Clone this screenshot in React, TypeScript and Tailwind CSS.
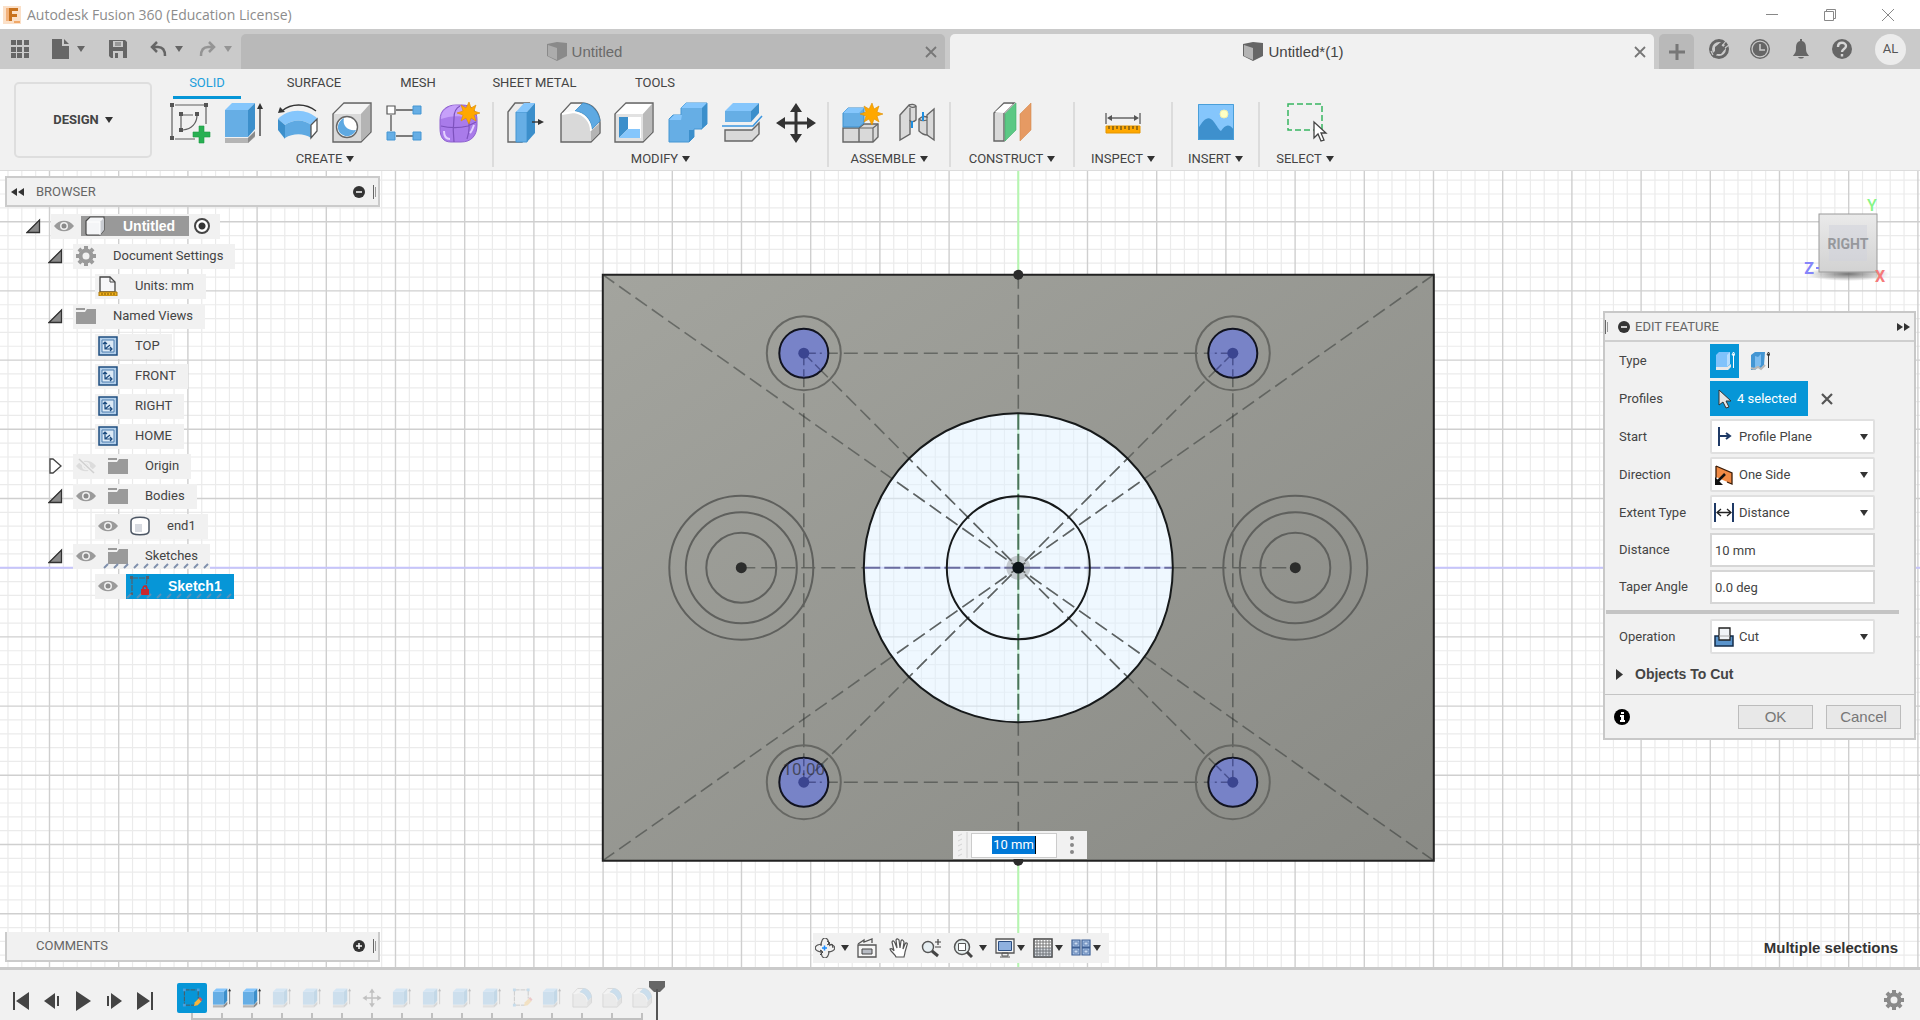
import type { ReactNode } from 'react';
import clsx from 'clsx';

type IconProps = {
  w?: number;
  h?: number;
  box?: string;
  className?: string;
  children?: ReactNode;
};

const Icon = ({ w = 20, h = w, box = `0 0 ${w} ${h}`, className, children }: IconProps) => (
  <svg width={w} height={h} viewBox={box} className={clsx('shrink-0', className)} fill="none" aria-hidden="true">
    {children}
  </svg>
);

const Caret = ({ className = 'text-[#333]' }: { className?: string }) => (
  <Icon w={8} h={6} className={className}>
    <path d="M0 0h8L4 6z" fill="currentColor" />
  </Icon>
);

/* ---------- ribbon icons, 40 x 42 ---------- */

const SketchIcon = () => (
  <>
    <path d="M5 3h29M2 5v29M36 5v17M5 37h20M13 13h10M11 14v12M27 13c0 8-5 14-14 15" stroke="#5f5f5f" strokeWidth="1.2" />
    <path d="M0 1h4v4H0zM34 1h4v4h-4zM0 34h4v4H0zM9 10h4v4H9zM25 10h4v4h-4zM9 26h4v4H9z" fill="#555" />
    <path d="M29 24h5v6h6v5h-6v6h-5v-6h-6v-5h6z" fill="#28b052" stroke="#1d9a43" strokeWidth=".6" />
  </>
);

const ExtrudeIcon = () => (
  <>
    <path d="M1 36h23l7-6v5l-7 6H1z" fill="#b5b5b5" />
    <path d="M24 36l7-7v5l-7 7z" fill="#8a8a8a" />
    <path d="M1 8h23v27H1z" fill="#66aee5" />
    <path d="M1 8l7-7h23l-7 7z" fill="#85c6fc" />
    <path d="M24 8l7-7v26l-7 8z" fill="#3c8fcb" />
    <path d="M36 6v28" stroke="#333" strokeWidth="1.3" />
    <path d="M36 1l3 6h-6z" fill="#333" />
  </>
);

const RevolveIcon = () => (
  <>
    <path d="M0 17c10-11 29-11 40 0l-7 6c-7-6-18-6-26 0z" fill="#85c6fc" />
    <path d="M7 23c8-6 19-6 26 0v13c-7-5-18-5-26 0z" fill="#5ea9e2" />
    <path d="M0 17l7 6v14l-7-9z" fill="#3c8fcb" />
    <path d="M33 23l6-6v12l-6 7z" fill="#fff" stroke="#555" strokeWidth="1.3" />
    <path d="M4 9c9-8 24-8 34 0" stroke="#333" strokeWidth="1.3" />
    <path d="M0 11l2-6 5 5z" fill="#333" />
  </>
);

const HoleIcon = () => (
  <>
    <path d="M1 12L12 1h27v29L29 40H1z" fill="#d9d9d9" stroke="#666" strokeWidth="1.4" />
    <path d="M2 12L12 2h26l-9 10z" fill="#f4f4f4" />
    <path d="M29 12l9-10v28l-9 9z" fill="#b4b4b4" />
    <circle cx="15" cy="25" r="10.500" fill="#fff" stroke="#666" strokeWidth="1.4" />
    <path d="M12 16c-6 3-8 10-4 15 5 5 13 4 16-3-8 1-14-4-12-12z" fill="#5ea9e2" />
  </>
);

const PatternIcon = () => (
  <>
    <path d="M10 8h17M5 13v16M10 34h17" stroke="#555" strokeWidth="1.3" />
    <path d="M1 4h8v8H1z" fill="#fff" stroke="#555" strokeWidth="1.2" />
    <path d="M27 4h8v8h-8zM1 30h8v8H1zM27 30h8v8h-8z" fill="#66aee5" stroke="#4496d3" />
  </>
);

const FormIcon = () => (
  <>
    <path d="M0 18C0 8 7 3 16 3h6c10 0 15 6 15 15v5c0 11-6 17-16 17H11C3 40 0 35 0 26z" fill="#a97bea" stroke="#8f63cf" />
    <path d="M9 5C3 8 1 12 1 17c8-3 18-4 27-1 1-5 0-9-6-12C17 3 13 3 9 5z" fill="#c6a0fa" />
    <path d="M1 24c8 2 19 2 27 0l8-4M14 16c-1 8-1 16 0 24M28 16c2 7 1 15-1 21M14 16c0-6 2-10 6-12" stroke="#7d52bd" strokeWidth="1.2" />
    <path d="M4 29c0 5 2 8 6 8M30 31c2-2 3-5 4-8" stroke="#e3d0ff" strokeWidth="2" />
    <path d="M29 0l2 6 5-3-2 6 6 2-6 2 2 6-5-3-2 6-3-6-5 3 2-6-6-2 6-2-2-6 5 3z" fill="#ffa800" stroke="#dd8f00" strokeWidth=".6" />
  </>
);

const PressPullIcon = () => (
  <>
    <path d="M2 10l7-9h14l-7 9v30H2z" fill="#ececec" stroke="#666" strokeWidth="1.4" />
    <path d="M10 10h11v30H10z" fill="#66aee5" stroke="#4496d3" />
    <path d="M10 10l8-9h11l-8 9z" fill="#85c6fc" />
    <path d="M21 10l8-9v30l-8 9z" fill="#3c8fcb" />
    <path d="M26 20h8" stroke="#333" strokeWidth="1.4" />
    <path d="M32 17l6 3-6 3z" fill="#333" />
  </>
);

const FilletIcon = () => (
  <>
    <path d="M1 12L11 1h11c11 0 18 10 18 20v10l-9 9H1z" fill="#d9d9d9" stroke="#666" strokeWidth="1.4" />
    <path d="M2 12L11 2h11l-7 8z" fill="#f8f8f8" />
    <path d="M15 9l8-8c10 1 16 10 17 18l-8 8C31 17 25 10 15 9z" fill="#5ea9e2" stroke="#3c8fcb" strokeWidth=".8" />
    <path d="M2 12l12-2c11 2 17 10 17 19" stroke="#fff" strokeWidth="2" />
    <path d="M31 29l8-7v9l-8 8z" fill="#b4b4b4" />
  </>
);

const ShellIcon = () => (
  <>
    <path d="M1 12L12 1h27v29L29 40H1z" fill="#e2e2e2" stroke="#666" strokeWidth="1.4" />
    <path d="M2 12L12 2h26l-9 10z" fill="#fff" />
    <path d="M29 12l9-10v28l-9 9z" fill="#bababa" />
    <path d="M5 15h22v21H5z" fill="#fff" />
    <path d="M5 15h9v12l-9 9z" fill="#3c8fcb" />
    <path d="M5 36l9-9h12v9z" fill="#85c6fc" />
  </>
);

const CombineIcon = () => (
  <>
    <path d="M1 17l4-4h8V6l5-5h21v21l-6 5h-7v8l-5 5H1z" fill="#66aee5" stroke="#4496d3" />
    <path d="M13 6l5-5h21l-5 5zM1 18l5-5h8l-1 5z" fill="#85c6fc" />
    <path d="M34 6l5-5v21l-6 6h-7v7l-5 5V28h13z" fill="#3c8fcb" />
  </>
);

const SplitIcon = () => (
  <>
    <path d="M3 28h27l7-7v11l-7 7H3z" fill="#d9d9d9" stroke="#666" strokeWidth="1.4" />
    <path d="M3 9h26v11H3z" fill="#66aee5" />
    <path d="M3 9l8-8h26l-8 8z" fill="#85c6fc" />
    <path d="M29 9l8-8v10l-8 9z" fill="#3c8fcb" />
    <path d="M0 24h31l9-10" stroke="#3d97e0" strokeWidth="1.6" />
  </>
);

const MoveIcon = () => (
  <>
    <path d="M20 7v28M6 21h28" stroke="#333" strokeWidth="3" />
    <path d="M20 1l6 9H14zM20 41l6-9H14zM0 21l9-6v12zM40 21l-9-6v12z" fill="#333" />
  </>
);

const ComponentIcon = () => (
  <>
    <path d="M1 26h16v14H1zM17 26l5-4h14v13l-5 5H17z" fill="#d9d9d9" stroke="#666" strokeWidth="1.4" />
    <path d="M17 26h14v14M31 26l5-4" stroke="#666" strokeWidth="1.2" />
    <path d="M1 11l5-5h16v15l-5 4H1z" fill="#66aee5" stroke="#3c8fcb" />
    <path d="M1 11l5-5h16l-5 5z" fill="#85c6fc" />
    <path d="M30 1l2 6 5-3-2 6 6 2-6 2 2 6-5-3-2 6-3-6-5 3 2-6-6-2 6-2-2-6 5 3z" fill="#ffa800" stroke="#dd8f00" strokeWidth=".6" />
  </>
);

const JointIcon = () => (
  <>
    <path d="M4 13l9-10c2-1 6-1 7 1v14c-2 2-4 2-6 1v13l-10 6z" fill="#d9d9d9" stroke="#666" strokeWidth="1.4" />
    <path d="M38 7v31l-7-5c-3 0-6-2-8-4V17c2-2 5-3 8-2l0-2z" fill="#d9d9d9" stroke="#666" strokeWidth="1.4" />
    <path d="M31 15v18M23 17c2 2 5 2 8 1M13 3c1 3 5 3 7 1M14 6v13" stroke="#666" strokeWidth="1.2" />
    <path d="M16 19v7M27 10v9" stroke="#1f8fe0" strokeWidth="2" />
  </>
);

const ConstructIcon = () => (
  <>
    <path d="M2 11L12 1h10L12 11v28H2z" fill="#d9d9d9" stroke="#666" strokeWidth="1.4" />
    <path d="M3 10l9-8h9l-9 9z" fill="#fff" />
    <path d="M13 12L24 1v27L13 39z" fill="#5bc884" stroke="#3fae68" strokeWidth=".6" />
    <path d="M28 12L39 1v27L28 39z" fill="#e69a63" stroke="#d5894f" strokeWidth=".6" />
  </>
);

const MeasureIcon = () => (
  <>
    <path d="M3 11v11M37 11v11M6 16h28" stroke="#666" strokeWidth="1.4" />
    <path d="M4 16l5-3v6zM36 16l-5-3v6z" fill="#555" />
    <path d="M3 24h34v7H3z" fill="#ffa800" stroke="#e39500" />
    <path d="M6 24v3M10 24v4M14 24v3M18 24v4M22 24v3M26 24v4M30 24v3M34 24v4" stroke="#5b4a1c" strokeWidth="1.2" />
  </>
);

const ImageIcon = () => (
  <>
    <path d="M2 2h36v36H2z" fill="#85c6fc" />
    <path d="M2 27c6-11 11-14 16-7 3 4 5 8 7 9 4-6 8-8 13-1v10H2z" fill="#3e90cd" />
    <circle cx="28" cy="12" r="4" fill="#ffffc4" stroke="#f0eeb0" />
    <path d="M2.500 2.500h35v35h-35z" stroke="#4a9fd9" />
  </>
);

const SelectIcon = () => (
  <>
    <path d="M3 2h34v26H3z" stroke="#37b560" strokeWidth="1.5" strokeDasharray="6 3" />
    <path d="M29 20v16l4-4 3 7 3-1-3-7h5z" fill="#fff" stroke="#444" strokeWidth="1.3" />
  </>
);

/* ---------- small icons ---------- */

const Eye = ({ off = false }: { off?: boolean }) => (
  <Icon w={20}>
    <path d="M0 10c5-7 15-7 20 0-5 7-15 7-20 0z" fill={off ? '#dcdcdc' : '#9a9a9a'} />
    <circle cx="10" cy="10" r="4" fill="#f0f0f0" />
    <circle cx="10" cy="10" r="2.500" fill={off ? '#dcdcdc' : '#8a8a8a'} />
    {off && <path d="M2 3l16 14" stroke="#f0f0f0" strokeWidth="4" />}
    {off && <path d="M3 3l15 14" stroke="#d0d0d0" strokeWidth="1.5" />}
  </Icon>
);

const Folder = () => (
  <Icon w={20}>
    <path d="M0 2h9v2H0z" fill="#9a9a9a" />
    <path d="M0 6h9l2-3h9v15H0z" fill="#9a9a9a" />
  </Icon>
);

const GearShape = ({ color }: { color: string }) => (
  <>
    <circle cx="10" cy="10" r="5.500" stroke={color} strokeWidth="4" />
    {[0, 45, 90, 135].map((a) => (
      <path key={a} d="M8 0h4v3H8zM8 17h4v3H8z" fill={color} transform={`rotate(${a} 10 10)`} />
    ))}
  </>
);

const Units = () => (
  <Icon w={20}>
    <path d="M2 1h10l5 5v10H2z" fill="#f6f6f8" stroke="#444" strokeWidth="1.3" />
    <path d="M12 1v5h5" stroke="#444" />
    <path d="M1 16h18v4H1z" fill="#f0b21c" stroke="#a8740a" />
    <path d="M4 17v2M7 17v2M10 17v2M13 17v2M16 17v2" stroke="#7a5200" />
  </Icon>
);

const ViewIcon = () => (
  <Icon w={20}>
    <path d="M1 1h18v18H1z" fill="#b3cfea" stroke="#1e4d80" strokeWidth="1.5" />
    <path d="M4 4h12v12H4z" fill="#dbe9f6" stroke="#4e7eb0" />
    <path d="M7 6v7h7M7 13l5-4M5 8l2-2 2 2M12 11l2 2-2 2" stroke="#1e4d80" strokeWidth="1.2" />
  </Icon>
);

const CubeIcon = () => (
  <Icon w={20}>
    <path d="M1 5l4-4h14v13l-4 5H2l-1-1z" fill="#f4f5f7" stroke="#4a4a4a" strokeWidth="1.2" />
    <path d="M15 6l4-4v12l-4 5z" fill="#c9ccd2" />
    <path d="M2 6h13v13" stroke="#fff" />
  </Icon>
);

const BodyIcon = () => (
  <Icon w={20}>
    <path d="M1 5c0-5 18-5 18 0v10c0 5-18 5-18 0z" fill="#fff" stroke="#4b5563" strokeWidth="1.5" />
    <path d="M5 8h7v8H5z" fill="#d7dae0" />
  </Icon>
);

const LockedSketch = () => (
  <Icon w={20}>
    <path d="M2 2h15M2 2v16M17 2l-1 10" stroke="#55606c" strokeWidth="1.2" strokeDasharray="6 1" />
    <path d="M0 0h3v3H0zM16 0h3v3h-3zM0 17h3v2H0z" fill="#55606c" />
    <path d="M11 13h8v6h-8z" fill="#c9282d" />
    <path d="M13 13c0-4 4-4 4 0" stroke="#c9282d" strokeWidth="1.5" />
  </Icon>
);

const Cursor = () => (
  <Icon w={14} h={20}>
    <path d="M1 1v15l4-3 3 6 3-1-3-6h5z" fill="#e6e6e6" stroke="#333" />
  </Icon>
);

const RoundGlyph = ({ plus = false }: { plus?: boolean }) => (
  <Icon w={12}>
    <circle cx="6" cy="6" r="6" fill="#333" />
    <path d={plus ? 'M3 6h6M6 3v6' : 'M3 6h6'} stroke="#fff" strokeWidth="1.5" />
  </Icon>
);

const Grip = () => (
  <span className="flex items-center gap-px">
    <span className="h-[14px] w-px bg-[#666]" />
    <span className="h-[10px] w-px bg-[#999]" />
  </span>
);

const DocCube = ({ dim }: { dim: boolean }) => (
  <Icon w={20}>
    <path d="M0 2l10-2 10 1v13l-10 5L0 14z" fill={dim ? '#8a8a8a' : '#666'} />
    <path d="M1 3l9 3v12l-9-4z" fill={dim ? '#acacac' : '#b4b4b4'} />
  </Icon>
);

/* ---------- title bar and document tabs ---------- */

const TitleBar = () => (
  <header className="flex h-[29px] items-center bg-white pl-[3px] pr-[26px]">
    <Icon w={18}>
      <path d="M0 0h18v18H0z" fill="#fbe0c8" />
      <path d="M5 2h10v3H9v3h5v3H9v4H5z" fill="#c8721e" />
      <path d="M3 2h3v13H3z" fill="#f2b27c" />
      <path d="M11 15h6v2h-6z" fill="#f0a868" />
    </Icon>
    <h1 className="ml-[6px] font-['Open_Sans',sans-serif] text-[14px] text-[#8c8c8c]">Autodesk Fusion 360 (Education License)</h1>
    <div className="ml-auto flex gap-[46px]">
      <button aria-label="Minimize">
        <Icon w={12}><path d="M0 5.500h12" stroke="#888" /></Icon>
      </button>
      <button aria-label="Restore">
        <Icon w={12}><path d="M.5 2.500h9v9h-9zM2.500 2V.5h9v9H10" stroke="#888" /></Icon>
      </button>
      <button aria-label="Close window">
        <Icon w={12}><path d="M0 0l12 12M12 0L0 12" stroke="#888" /></Icon>
      </button>
    </div>
  </header>
);

const DocTab = ({ title, active = false }: { title: string; active?: boolean }) => (
  <div
    className={clsx(
      'flex flex-1 items-center rounded-t-[5px] pr-[8px]',
      active ? 'bg-[#f1f1f1] text-[#444]' : 'bg-[#b9b9b9] text-[#6a6a6a]',
    )}
  >
    <button className="flex flex-1 items-center justify-center gap-[5px] pl-[3px] pt-px font-['Liberation_Sans',sans-serif] text-[15px]">
      <DocCube dim={!active} />
      {title}
    </button>
    <button aria-label={`Close ${title}`}>
      <Icon w={12}><path d="M1 1l10 10M11 1L1 11" stroke="#777" strokeWidth="1.8" /></Icon>
    </button>
  </div>
);

const TabBar = () => (
  <div className="flex h-10 bg-[#cacaca] pt-[5px]">
    <div className="flex w-[241px] items-center pb-[6px] pl-[11px] text-[#666]">
      <button aria-label="Data panel" className="mr-[23px]">
        <Icon w={18}>
          <path d="M0 0h5v5H0zM6 0h5v5H6zM13 0h5v5h-5zM0 7h5v5H0zM6 7h5v5H6zM13 7h5v5h-5zM0 13h5v5H0zM6 13h5v5H6zM13 13h5v5h-5z" fill="currentColor" />
        </Icon>
      </button>
      <button aria-label="File" className="mr-[24px] flex items-center gap-2">
        <Icon w={17} h={20}><path d="M0 0h10v7h7v13H0zM12 0l5 5h-5z" fill="currentColor" /></Icon>
        <Caret className="text-[#666]" />
      </button>
      <button aria-label="Save" className="mr-[23px]">
        <Icon w={18}>
          <path d="M0 0h16l2 2v16H2l-2-2z" fill="currentColor" />
          <path d="M4 1h10v6H4zM4 11h10v7H4z" fill="#cacaca" />
          <path d="M6 3h6M6 5h6" stroke="#666" />
          <path d="M6 13h3v5H6z" fill="#666" />
        </Icon>
      </button>
      <button aria-label="Undo" className="mr-[16px] flex items-center gap-2">
        <Icon w={17} h={16}><path d="M7 1L2 6l5 5M2 6h6c5 0 7 4 7 9" stroke="currentColor" strokeWidth="2.500" /></Icon>
        <Caret className="text-[#666]" />
      </button>
      <button aria-label="Redo" className="flex items-center gap-2 text-[#949494]">
        <Icon w={17} h={16}><path d="M10 1l5 5-5 5M15 6H9c-5 0-7 4-7 9" stroke="currentColor" strokeWidth="2.500" /></Icon>
        <Caret className="text-[#949494]" />
      </button>
    </div>
    <div className="flex flex-1 gap-[5px]">
      <DocTab title="Untitled" />
      <DocTab title="Untitled*(1)" active />
    </div>
    <button aria-label="New design" className="ml-[5px] flex w-[35px] items-center justify-center rounded-t-[5px] bg-[#b9b9b9]">
      <Icon w={16}><path d="M8 0v16M0 8h16" stroke="#777" strokeWidth="3" /></Icon>
    </button>
    <div className="flex items-center gap-[21px] pb-[5px] pl-[15px] pr-[14px] text-[#666]">
      <button aria-label="Extensions">
        <Icon w={20}>
          <circle cx="10" cy="10" r="8.500" stroke="currentColor" strokeWidth="3" />
          <path d="M6 8l5-4 5 6-4 5H8l-3 4-3-3 4-4z" fill="currentColor" />
          <path d="M10 7l4-4M14 10l4-4" stroke="currentColor" strokeWidth="2.500" />
          <path d="M13 7l4-5M16 9l4-3M2 12l2 4" stroke="#cacaca" strokeWidth="1.2" />
        </Icon>
      </button>
      <button aria-label="Job status">
        <Icon w={20}>
          <circle cx="10" cy="10" r="9.300" stroke="currentColor" strokeWidth="1.4" />
          <circle cx="10" cy="10" r="7.300" fill="currentColor" />
          <path d="M10 5v6h5" stroke="#cacaca" strokeWidth="1.6" />
        </Icon>
      </button>
      <button aria-label="Notifications">
        <Icon w={20}>
          <path d="M9 0h2v2c4 1 4 5 4 8 0 4 2 5 3 7H2c1-2 3-3 3-7 0-3 0-7 4-8zM7 18h6c-1 2-5 2-6 0z" fill="currentColor" />
        </Icon>
      </button>
      <button aria-label="Help">
        <Icon w={20}>
          <circle cx="10" cy="10" r="10" fill="currentColor" />
          <path d="M6 8c0-6 8-5 8-1 0 3-4 3-4 6M10 15v2.500" stroke="#d6d6d6" strokeWidth="2.400" />
        </Icon>
      </button>
      <button className="ml-0.5 flex size-[31px] items-center justify-center rounded-full bg-[#ececec] text-[13px] text-[#555]">AL</button>
    </div>
  </div>
);

/* ---------- ribbon ---------- */

const ribbonTabs = [
  { label: 'SOLID', width: 'w-[68px]' },
  { label: 'SURFACE', width: 'w-[146px]' },
  { label: 'MESH', width: 'w-[62px]' },
  { label: 'SHEET METAL', width: 'w-[171px]' },
  { label: 'TOOLS', width: 'w-[70px]' },
];

const groups = [
  { name: 'CREATE', width: 'w-[336px]', tools: [SketchIcon, ExtrudeIcon, RevolveIcon, HoleIcon, PatternIcon, FormIcon] },
  { name: 'MODIFY', width: 'w-[335px]', tools: [PressPullIcon, FilletIcon, ShellIcon, CombineIcon, SplitIcon, MoveIcon] },
  { name: 'ASSEMBLE', width: 'w-[122px]', tools: [ComponentIcon, JointIcon] },
  { name: 'CONSTRUCT', width: 'w-[124px]', tools: [ConstructIcon] },
  { name: 'INSPECT', width: 'w-[98px]', tools: [MeasureIcon] },
  { name: 'INSERT', width: 'w-[87px]', tools: [ImageIcon] },
  { name: 'SELECT', width: 'w-[90px]', tools: [SelectIcon] },
];

const Ribbon = () => (
  <div className="flex h-[102px] border-b border-[#dcdcdc] bg-[#f1f1f1] text-[13px] text-[#444]">
    <button className="ml-[14px] mt-[13px] flex h-[76px] w-[138px] items-center justify-center gap-[6px] rounded-[5px] border-2 border-[#dedede] font-bold">
      DESIGN <Caret />
    </button>
    <div className="ml-[6px]">
      <nav className="flex h-[33px] items-start pl-[15px]">
        {ribbonTabs.map((tab, i) => (
          <button
            key={tab.label}
            className={clsx(
              'h-[30px] whitespace-nowrap text-center',
              tab.width,
              i === 0 ? 'border-b-[3px] border-[#0696d7] text-[#1c9fdc]' : 'pb-[3px]',
            )}
          >
            {tab.label}
          </button>
        ))}
      </nav>
      <div className="flex h-[65px]">
        {groups.map((group, i) => (
          <div
            key={group.name}
            className={clsx(
              'flex flex-col items-center justify-between',
              group.width,
              i < groups.length - 1 && 'border-r-2 border-[#dcdcdc]',
            )}
          >
            <div className="flex gap-[14px]">
              {group.tools.map((Tool, n) => (
                <button key={n} aria-label={`${group.name} tool ${n + 1}`}>
                  <Icon w={40} h={42} className="overflow-visible"><Tool /></Icon>
                </button>
              ))}
            </div>
            <button className="flex items-center gap-1 leading-[16px]">
              {group.name} <Caret />
            </button>
          </div>
        ))}
      </div>
    </div>
  </div>
);

/* ---------- sketch canvas ---------- */

const GRID = 69.2 / 5;
const range = (n: number) => Array.from({ length: n * 2 + 1 }, (_, i) => i - n);
const corners = [[-1, -1], [1, -1], [-1, 1], [1, 1]];

const GridLines = ({ major }: { major: boolean }) => (
  <g stroke={major ? '#cfcfcf' : '#ebebeb'} strokeWidth={major ? 1.4 : 1.2}>
    {range(120).filter((i) => (i % 5 === 0) === major).map((i) => (
      <path key={i} d={`M${i * GRID} -1400V1400M-2400 ${i * GRID}H2400`} />
    ))}
  </g>
);

const Diagonals = () => (
  <>
    {corners.map(([x, y]) => (
      <path key={`${x}${y}`} d={`M${x * 415.5} ${y * 293}L0 0M${x * 214.5} ${y * 214.5}L0 0`} />
    ))}
  </>
);

const Sketch = () => (
  <svg className="absolute inset-0 h-full w-full bg-white" aria-label="Sketch canvas">
    <defs>
      <linearGradient id="plate" x1="0" y1="0" x2="1" y2="1">
        <stop offset="0" stopColor="#a3a49e" />
        <stop offset="1" stopColor="#898a85" />
      </linearGradient>
      <clipPath id="bore"><circle r="154" /></clipPath>
    </defs>
    <svg x="50%" y="50%" overflow="visible">
      <g transform="translate(58.3 -1.3)" fill="none">
        <GridLines major={false} />
        <GridLines major />
        <path d="M-2400 0H2400" stroke="#c6c4fb" strokeWidth="2" />
        <path d="M0 -1400V1400" stroke="#b5f7b0" strokeWidth="2" />
        <circle r="154.500" fill="#e0f1ff" fillOpacity=".5" />
        <path
          d="M-415.500 -293H415.500V293H-415.500zM-154.500 0a154.500 154.500 0 0 0 309 0a154.500 154.500 0 0 0 -309 0z"
          fill="url(#plate)"
          fillRule="evenodd"
        />
        <path d="M-415.500 -293H415.500V293H-415.500z" stroke="#222" strokeWidth="2" />

        {/* construction lines */}
        <g stroke="#2a2d2c" strokeOpacity=".48" strokeWidth="1.600" strokeDasharray="14 6">
          <path d="M-277 0H-154M154 0H277M0 -293V-154M0 154V293" />
          <path d="M-214.500 -214.500H214.500M-214.500 214.500H214.500M-214.500 -214.500V214.500M214.500 -214.500V214.500" />
          <Diagonals />
        </g>
        <g clipPath="url(#bore)" stroke="#2a2d2c" strokeOpacity=".5" strokeWidth="1.600" strokeDasharray="14 6">
          <Diagonals />
        </g>
        <path d="M0 -154V154" stroke="#1f4a30" strokeOpacity=".75" strokeWidth="2" strokeDasharray="16 4" />
        <path d="M-154 0H154" stroke="#33336e" strokeOpacity=".65" strokeWidth="2" strokeDasharray="16 4" />

        <circle r="154.500" stroke="#16191a" strokeWidth="2" />
        <circle r="71.500" stroke="#16191a" strokeWidth="2" />
        {[-277, 277].map((x) => (
          <g key={x} stroke="#5f605d" strokeWidth="2">
            <circle cx={x} r="35" />
            <circle cx={x} r="55.500" />
            <circle cx={x} r="72" />
            <circle cx={x} r="5.500" fill="#2c2d2c" stroke="none" />
          </g>
        ))}
        {corners.map(([x, y]) => (
          <g key={`${x}${y}`} transform={`translate(${x * 214.5} ${y * 214.5})`}>
            <circle r="37" stroke="#666763" strokeWidth="2" />
            <circle r="24.500" fill="#7581cb" fillOpacity=".93" stroke="#111320" strokeWidth="2" />
            <path d={`M0 0H${x * -18}M0 0V${y * -24}M0 0L${x * -17} ${y * -17}`} stroke="#4a5290" strokeWidth="1.500" strokeDasharray="12 4" />
            <circle r="5.500" fill="#3b4590" />
          </g>
        ))}
        <text x="-214.500" y="207" textAnchor="middle" fontSize="17" fill="#33343a" fillOpacity=".75">10.00</text>
        <circle r="12" fill="#777" fillOpacity=".35" />
        <circle r="6" fill="#0c1418" />
        <circle cy="-293" r="5" fill="#2b2b2b" />
        <circle cy="293" r="5" fill="#2b2b2b" />
      </g>
    </svg>
  </svg>
);

const FloatingInput = () => (
  <div className="absolute left-[calc(50%-7px)] top-[calc(50%+262px)] flex h-[28px] w-[134px] items-center bg-[#f1f1f1] pl-[4px]">
    <Icon w={12} h={26}>
      <path d="M1 4l4-2M1 9l4-2M1 14l4-2M1 19l4-2M1 24l4-2" stroke="#d4d4d4" />
      <path d="M10 0v26" stroke="#d0d0d0" />
    </Icon>
    <div className="ml-[2px] flex h-[25px] w-[86px] items-center justify-center border border-[#ccc] bg-white">
      <input
        aria-label="Distance"
        defaultValue="10 mm"
        className="h-[18px] w-[44px] border-r border-black bg-[#0078d7] text-center text-[13px] text-white outline-none"
      />
    </div>
    <button aria-label="More options" className="ml-[13px]">
      <Icon w={4} h={18}>
        <path d="M0 2a2 2 0 1 0 4 0 2 2 0 1 0-4 0M0 9a2 2 0 1 0 4 0 2 2 0 1 0-4 0M0 16a2 2 0 1 0 4 0 2 2 0 1 0-4 0" fill="#888" />
      </Icon>
    </button>
  </div>
);

/* ---------- browser tree ---------- */

const TreeToggle = ({ open }: { open: boolean }) => (
  <button aria-label={open ? 'Collapse' : 'Expand'} className="mr-[10px]">
    <Icon w={15} h={16}>
      {open ? (
        <>
          <path d="M0 15L14 1v14z" fill="#8a8a8a" />
          <path d="M1 14.500L13.500 2v12.500z" stroke="#333" strokeWidth="1.3" />
        </>
      ) : (
        <path d="M2 1h3l8 7-8 7H2z" fill="#fff" stroke="#444" strokeWidth="1.3" />
      )}
    </Icon>
  </button>
);

const Hatch = ({ className }: { className: string }) => (
  <Icon w={112} h={6} className={className}>
    {Array.from({ length: 11 }, (_, i) => (
      <path key={i} d={`M${i * 10 + 1} 5l4-4`} stroke="#7f90ad" strokeWidth="2" />
    ))}
  </Icon>
);

type NodeProps = {
  label: string;
  icon: ReactNode;
  level: 1 | 2;
  open?: boolean;
  eye?: 'on' | 'off';
  hatched?: boolean;
};

const TreeNode = ({ label, icon, level, open, eye, hatched }: NodeProps) => (
  <li className={clsx('flex h-[30px] items-center', level === 1 ? 'pl-[43px]' : 'pl-[90px]')}>
    {open !== undefined && <TreeToggle open={open} />}
    <div className="relative flex h-[25px] items-center bg-[#f1f1f1] pl-[3px] pr-[12px]">
      {eye && <button aria-label={`Toggle ${label}`} className="mr-[12px]"><Eye off={eye === 'off'} /></button>}
      {icon}
      <span className="ml-[17px]">{label}</span>
      {hatched && <Hatch className="absolute bottom-0 left-[30px]" />}
    </div>
  </li>
);

const Browser = () => (
  <section className="text-[13px] text-[#444]">
    <div className="flex h-[31px] items-center border-2 border-[#cbcbcb] bg-[#f1f1f1] pl-[4px] pr-[2px] text-[#666]">
      <button aria-label="Collapse browser">
        <Icon w={13} h={8}><path d="M6 0v8L0 4zM13 0v8L7 4z" fill="#333" /></Icon>
      </button>
      <h2 className="ml-[12px]">BROWSER</h2>
      <button aria-label="Minimize browser" className="ml-auto mr-[8px]"><RoundGlyph /></button>
      <Grip />
    </div>
    <ul className="pt-1">
      <li className="flex h-[30px] items-center pl-[21px]">
        <TreeToggle open />
        <div className="flex h-[25px] items-center bg-[#f1f1f1] pl-[3px] pr-[10px]">
          <button aria-label="Toggle Untitled" className="mr-[7px]"><Eye /></button>
          <span className="flex h-[20px] w-[108px] items-center bg-[#999] pl-[4px] text-white">
            <CubeIcon />
            <span className="ml-[18px] font-['Liberation_Sans',sans-serif] text-[14px] font-bold">Untitled</span>
          </span>
          <input type="radio" name="active" aria-label="Activate Untitled" defaultChecked className="ml-[5px] size-[16px] appearance-none rounded-full border-2 border-[#444] bg-[radial-gradient(circle,#333_3px,#fff_4px)]" />
        </div>
      </li>
      <TreeNode level={1} open label="Document Settings" icon={<Icon w={20}><GearShape color="#9a9a9a" /></Icon>} />
      <TreeNode level={2} label="Units: mm" icon={<Units />} />
      <TreeNode level={1} open label="Named Views" icon={<Folder />} />
      {['TOP', 'FRONT', 'RIGHT', 'HOME'].map((view) => (
        <TreeNode key={view} level={2} label={view} icon={<ViewIcon />} />
      ))}
      <TreeNode level={1} open={false} eye="off" label="Origin" icon={<Folder />} />
      <TreeNode level={1} open eye="on" label="Bodies" icon={<Folder />} />
      <TreeNode level={2} eye="on" label="end1" icon={<BodyIcon />} />
      <TreeNode level={1} open eye="on" label="Sketches" icon={<Folder />} hatched />
      <li className="flex h-[30px] items-center pl-[90px]">
        <div className="flex h-[25px] w-[31px] items-center bg-[#f1f1f1] pl-[3px]">
          <button aria-label="Toggle Sketch1"><Eye /></button>
        </div>
        <div className="relative flex h-[25px] w-[108px] items-center bg-[#0696d7] pl-[4px] text-white">
          <LockedSketch />
          <span className="ml-[18px] font-['Liberation_Sans',sans-serif] text-[14px] font-bold">Sketch1</span>
          <Hatch className="absolute bottom-0 left-0 opacity-70" />
        </div>
      </li>
    </ul>
  </section>
);

const Comments = () => (
  <section className="flex h-[30px] items-center border-x-2 border-b-2 border-[#cbcbcb] bg-[#f1f1f1] pl-[29px] pr-[2px] text-[13px] text-[#666]">
    <h2>COMMENTS</h2>
    <button aria-label="Add comment" className="ml-auto mr-[8px]"><RoundGlyph plus /></button>
    <Grip />
  </section>
);

/* ---------- navigation bar ---------- */

const navTools = [
  {
    name: 'Orbit',
    gap: 'gap-[6px]',
    menu: true,
    art: (
      <>
        <path d="M7 6C-2 7-2 13 7 14M13 6c9 1 9 7 0 8" stroke="#555" strokeWidth="1.2" />
        <path d="M6 12c0 11 8 10 8 1M6 8c0-11 8-10 8-1" stroke="#555" strokeWidth="1.2" />
        <path d="M7 10h5M9.500 7.500v5" stroke="#1a8cff" strokeWidth="1.5" />
        <path d="M12 3l3 2-3 2M14 8l3-2 1 4M5 12l3 2-3 3" stroke="#444" />
      </>
    ),
  },
  {
    name: 'Look at',
    art: (
      <>
        <path d="M1 7h18v12H1z" fill="#f6f6f6" stroke="#555" strokeWidth="1.3" />
        <path d="M5 11h10v5H5z" fill="#b8bcc4" stroke="#444" />
        <path d="M1 6l6-4v2l8-3v4" stroke="#555" strokeWidth="1.3" />
      </>
    ),
  },
  {
    name: 'Pan',
    art: (
      <path d="M7 19c-1-3-5-5-6-8 1-1 3 0 4 2L3 4c1-2 2-1 3 1l2 5L7 2c1-2 2-1 3 0l1 8 1-7c1-2 2-1 3 1l-1 7 2-5c1-2 3-1 2 1l-2 7c0 2-1 4-1 5z" fill="#fff" stroke="#555" strokeWidth="1.2" />
    ),
  },
  {
    name: 'Zoom',
    art: (
      <>
        <circle cx="7" cy="9" r="5.500" fill="#e6eef2" stroke="#555" strokeWidth="1.4" />
        <path d="M11 13l6 5" stroke="#444" strokeWidth="3" />
        <path d="M14 4h6M17 1v6M14 9h6" stroke="#444" strokeWidth="1.2" />
      </>
    ),
  },
  {
    name: 'Fit',
    gap: 'gap-[6px]',
    menu: true,
    art: (
      <>
        <circle cx="9" cy="9" r="7.500" fill="#e6eeee" stroke="#555" strokeWidth="1.5" />
        <path d="M5.500 5.500h7v7h-7z" fill="#fff" stroke="#555" />
        <path d="M14 14l5 5" stroke="#444" strokeWidth="3" />
      </>
    ),
  },
  {
    name: 'Display settings',
    gap: 'gap-[2px]',
    menu: true,
    art: (
      <>
        <path d="M1 1h18v14H1z" fill="#f4f4f4" stroke="#555" strokeWidth="1.3" />
        <path d="M3.500 3.500h13v9h-13z" fill="#8fb1df" stroke="#2d4f82" />
        <path d="M7 15h6v3H7zM5 19h10" stroke="#555" />
      </>
    ),
  },
  {
    name: 'Grid',
    gap: 'gap-[2px]',
    menu: true,
    art: (
      <>
        <path d="M1 1h18v18H1z" fill="#fff" stroke="#444" strokeWidth="1.5" />
        <path d="M1 4h18M1 7h18M1 10h18M1 13h18M1 16h18M4 1v18M7 1v18M10 1v18M13 1v18M16 1v18" stroke="#777" />
        <path d="M1 10h18v9H1z" fill="#5b6b80" fillOpacity=".25" />
      </>
    ),
  },
  {
    name: 'Viewports',
    gap: 'gap-[2px]',
    menu: true,
    art: (
      <>
        <path d="M1 2h8v7H1zM11 2h8v7h-8zM1 10h8v7H1zM11 10h8v7h-8z" fill="#9fbbe0" stroke="#3d5f94" strokeWidth="1.2" />
        <path d="M3 4h4v3H3zM13 4h4v3h-4zM3 12h4v3H3zM13 12h4v3h-4z" fill="#c9daf0" stroke="#5b7cae" strokeWidth=".8" />
      </>
    ),
  },
];

const NavBar = () => (
  <div className="flex h-[30px] w-[296px] items-center gap-[8px] bg-[#f1f1f1] pl-[2px]">
    {navTools.map((tool) => (
      <button key={tool.name} aria-label={tool.name} className={clsx('flex min-w-6 items-center', tool.gap)}>
        <Icon w={20}>{tool.art}</Icon>
        {tool.menu && <Caret />}
      </button>
    ))}
  </div>
);

/* ---------- view cube and edit panel ---------- */

const ViewCube = () => (
  <svg width="96" height="100" viewBox="0 0 96 100" className="mr-[24px]" aria-label="View cube" fontFamily="Roboto, sans-serif">
    <defs>
      <linearGradient id="cube" x1="0" y1="0" x2="0" y2="1">
        <stop offset="0" stopColor="#eaeaea" />
        <stop offset="1" stopColor="#d2d2d2" />
      </linearGradient>
      <radialGradient id="shade">
        <stop offset="0" stopColor="#777" />
        <stop offset="1" stopColor="#777" stopOpacity="0" />
      </radialGradient>
    </defs>
    <ellipse cx="52" cy="79" rx="42" ry="7" fill="url(#shade)" />
    <rect x="23" y="19" width="58" height="58" fill="url(#cube)" stroke="#9a9a9a" />
    <path d="M33 30h38v36H33z" fill="#cfd2dc" fillOpacity=".5" />
    <text x="52" y="54" textAnchor="middle" fontSize="14" fontWeight="700" fill="#96989c">RIGHT</text>
    <text x="76" y="16" textAnchor="middle" fontSize="16" fontWeight="500" fill="#86f586">Y</text>
    <text x="13" y="79" textAnchor="middle" fontSize="16" fontWeight="700" fill="#8585fa">Z</text>
    <text x="84" y="87" textAnchor="middle" fontSize="16" fontWeight="700" fill="#f57a7a">X</text>
    <path d="M20 73h3" stroke="#8585fa" strokeWidth="2" />
  </svg>
);

const startArt = <path d="M5 0v19M5 9h11M12 6l4 3-4 3" stroke="#1f3a66" strokeWidth="2" />;
const directionArt = (
  <>
    <path d="M2 1l16 7v11L2 12z" fill="#f08a44" />
    <path d="M2 1l16 7v11l-5-2M2 1v12" stroke="#3a1c08" strokeWidth="1.300" />
    <path d="M11 9l-8 8" stroke="#111" strokeWidth="2.500" />
    <path d="M1 12v8h8z" fill="#111" />
  </>
);
const extentArt = (
  <>
    <path d="M1 0v19M19 0v19" stroke="#1f3a66" strokeWidth="2" />
    <path d="M3 9.500h14M7 6L3 9.500 7 13M13 6l4 3.500-4 3.500" stroke="#222" strokeWidth="1.300" />
  </>
);
const cutArt = (
  <>
    <path d="M1 9h18v10H1z" fill="#5a94cc" stroke="#142c4a" strokeWidth="1.500" />
    <path d="M5 1h11v12H5z" fill="#f1f4f7" stroke="#222" strokeWidth="1.300" />
    <path d="M5 9h11" stroke="#aaa" />
  </>
);

const Field = ({ label, id, children }: { label: string; id: string; children: ReactNode }) => (
  <div className="flex items-center">
    <label htmlFor={id} className="w-[91px]">{label}</label>
    {children}
  </div>
);

const SelectField = ({ label, id, value, art }: { label: string; id: string; value: string; art: ReactNode }) => (
  <Field label={label} id={id}>
    <div className="flex h-[35px] w-[165px] items-center rounded-[2px] border-2 border-[#e0e0e0] bg-white pl-[2px] pr-[5px]">
      <Icon w={20}>{art}</Icon>
      <select id={id} className="ml-[5px] flex-1 appearance-none bg-transparent outline-none">
        <option>{value}</option>
      </select>
      <Caret />
    </div>
  </Field>
);

const EditPanel = () => (
  <section className="w-[313px] border-2 border-[#c8c8c8] bg-[#f1f1f1] text-[13px] text-[#444]">
    <div className="flex h-[29px] items-center border-b-2 border-[#cfcfcf] pr-[4px] text-[#666]">
      <Grip />
      <button aria-label="Minimize panel" className="ml-[10px]"><RoundGlyph /></button>
      <h2 className="ml-[5px]">EDIT FEATURE</h2>
      <button aria-label="Dock panel" className="ml-auto">
        <Icon w={13} h={8}><path d="M0 0v8l6-4zM7 0v8l6-4z" fill="#333" /></Icon>
      </button>
    </div>
    <div className="flex flex-col gap-[3px] pl-[14px] pt-[2px]">
      <Field label="Type" id="type">
        <div className="flex h-[34px] items-center">
          <button id="type" aria-label="Extrude" className="flex h-[34px] w-[29px] items-center justify-center bg-[#0696d7]">
            <Icon w={20}>
              <path d="M1 16h11l4-3v3l-3 3H1z" fill="#e8e8e8" />
              <path d="M1 4l3-3h11v12l-3 3H1z" fill="#7fc2fb" />
              <path d="M12 4l3-3v12l-3 3z" fill="#b5dcfd" />
              <path d="M18.500 3v14M17 4l1.500-3L20 4z" stroke="#fff" />
            </Icon>
          </button>
          <button aria-label="Thin extrude" className="ml-[11px]">
            <Icon w={20}>
              <path d="M1 4l4-3h10l-1 13-4 4-2-2-3 3H1z" fill="#4496d3" />
              <path d="M5 5l3 1 3-3v11l-3 3-3-1z" fill="#7dbdf0" />
              <path d="M1 17l3 1 4-2 3 2 4-4" stroke="#b8b8b8" strokeWidth="2" />
              <path d="M18.500 3v14M17 4l1.500-3L20 4z" stroke="#333" />
            </Icon>
          </button>
        </div>
      </Field>
      <Field label="Profiles" id="profiles">
        <button id="profiles" className="flex h-[35px] w-[98px] items-center gap-[5px] bg-[#0696d7] pl-[8px] text-white">
          <Cursor />
          4 selected
        </button>
        <button aria-label="Clear profiles" className="ml-[13px]">
          <Icon w={12}><path d="M1 1l10 10M11 1L1 11" stroke="#555" strokeWidth="2.200" /></Icon>
        </button>
      </Field>
      <SelectField id="start" label="Start" value="Profile Plane" art={startArt} />
      <SelectField id="direction" label="Direction" value="One Side" art={directionArt} />
      <SelectField id="extent" label="Extent Type" value="Distance" art={extentArt} />
      <Field label="Distance" id="distance">
        <input id="distance" defaultValue="10 mm" className="h-[34px] w-[165px] border-2 border-[#d6d6d6] bg-white pl-[3px] outline-none" />
      </Field>
      <Field label="Taper Angle" id="taper">
        <input id="taper" defaultValue="0.0 deg" className="h-[34px] w-[165px] border-2 border-[#d6d6d6] bg-white pl-[3px] outline-none" />
      </Field>
    </div>
    <div className="mb-[5px] ml-px mr-[15px] mt-[6px] h-1 bg-[#c4c4c4]" />
    <div className="pl-[14px]">
      <SelectField id="operation" label="Operation" value="Cut" art={cutArt} />
    </div>
    <button className="flex h-[40px] w-full items-center gap-[12px] pl-[11px] font-['Liberation_Sans',sans-serif] text-[14px] font-bold">
      <Icon w={7} h={11}><path d="M0 0l7 5.500L0 11z" fill="#333" /></Icon>
      Objects To Cut
    </button>
    <div className="flex h-[44px] items-center gap-[13px] border-t border-[#c4c4c4] pl-[9px] pr-[13px] font-['Liberation_Sans',sans-serif] text-[15px] text-[#777]">
      <Icon w={16} className="mr-auto">
        <circle cx="8" cy="8" r="8" fill="#000" />
        <path d="M7 3h3v2H7zM6 6h4v5h1v2H6v-2h1V8H6z" fill="#fff" />
      </Icon>
      <button className="h-[24px] w-[75px] border border-[#bcbcbc] bg-[#e8e8e8] leading-[20px]">OK</button>
      <button className="h-[24px] w-[75px] border border-[#bcbcbc] bg-[#e8e8e8] leading-[20px]">Cancel</button>
    </div>
  </section>
);

/* ---------- timeline ---------- */

const playback = [
  { name: 'Go to start', d: 'M0 1h2v18H0zM16 1v18L3 10z' },
  { name: 'Step back', d: 'M0 10l11-8v16zM13 5h2v10h-2z' },
  { name: 'Play', d: 'M1 0l15 10L1 20z' },
  { name: 'Step forward', d: 'M1 5h2v10H1zM5 2l11 8-11 8z' },
  { name: 'Go to end', d: 'M14 1h2v18h-2zM0 1l13 9L0 19z' },
];

type Feature = 'sketch' | 'extrude' | 'move' | 'fillet';

const timeline: Feature[] = [
  'sketch', 'extrude', 'extrude', 'extrude', 'extrude', 'extrude', 'move', 'extrude',
  'extrude', 'extrude', 'extrude', 'sketch', 'extrude', 'fillet', 'fillet', 'fillet',
];

const TimelineSketch = () => (
  <>
    <path d="M5 4h28M4 6v28M33 6v16M6 36h20" stroke="#555" strokeWidth="2" strokeDasharray="10 2" />
    <path d="M1 1h6v6H1zM30 1h6v6h-6zM1 33h6v6H1z" fill="#4a9fdc" />
    <path d="M24 38l2-8 8-8 6 6-8 8z" fill="#f5b53d" />
    <path d="M34 22l3-3 5 5-3 4z" fill="#e05050" />
  </>
);

const featureArt = { sketch: TimelineSketch, extrude: ExtrudeIcon, move: MoveIcon, fillet: FilletIcon };

const Timeline = () => (
  <footer className="flex h-[53px] items-start border-t-[3px] border-[#cacaca] bg-[#f1f1f1]">
    <div className="flex gap-[15px] pl-[13px] pt-[21px]">
      {playback.map((p) => (
        <button key={p.name} aria-label={p.name}>
          <Icon w={16} h={20}><path d={p.d} fill="#444" /></Icon>
        </button>
      ))}
    </div>
    <div className="ml-[24px] pt-[13px]">
      <div className="flex">
        {timeline.map((feature, i) => {
          const Art = featureArt[feature];
          return (
            <div key={i} className="flex flex-col items-center">
              <button
                aria-label={`${feature} ${i + 1}`}
                className={clsx('flex size-[30px] items-center justify-center rounded-[2px]', i === 0 && 'bg-[#0696d7]')}
              >
                <Icon w={20} box="0 0 40 42" className={clsx('overflow-visible', i > 2 && 'opacity-25')}><Art /></Icon>
              </button>
              <span className="h-[5px] w-[2px] bg-[#c0c0c0]" />
            </div>
          );
        })}
      </div>
      <div className="mx-[14px] h-[2px] bg-[#c0c0c0]" />
    </div>
    <Icon w={16} h={39} className="-ml-[8px] mt-[11px]">
      <path d="M0 0h16v6l-5 5H5L0 6z" fill="#666" />
      <path d="M7 8h2v31H7z" fill="#555" />
    </Icon>
    <button aria-label="Timeline settings" className="ml-auto mr-[16px] mt-[20px]">
      <Icon w={20}><GearShape color="#8a8a8a" /></Icon>
    </button>
  </footer>
);

const App = () => (
  <div className="flex min-h-screen flex-col font-[Roboto,sans-serif]">
    <TitleBar />
    <TabBar />
    <Ribbon />
    <main className="relative flex flex-1 overflow-hidden">
      <Sketch />
      <FloatingInput />
      <div className="relative flex flex-1 flex-col pl-[5px]">
        <div className="flex w-[375px] flex-1 flex-col justify-between pb-[5px] pt-[5px]">
          <Browser />
          <Comments />
        </div>
      </div>
      <div className="relative flex flex-col justify-end pb-[4px]">
        <NavBar />
      </div>
      <div className="relative flex flex-1 flex-col items-end pr-[4px] pt-[24px]">
        <ViewCube />
        <div className="mt-[16px]"><EditPanel /></div>
        <p className="mb-[8px] mr-[18px] mt-auto font-['Liberation_Sans',sans-serif] text-[15px] font-bold text-[#333]">Multiple selections</p>
      </div>
    </main>
    <Timeline />
  </div>
);

export default App;
